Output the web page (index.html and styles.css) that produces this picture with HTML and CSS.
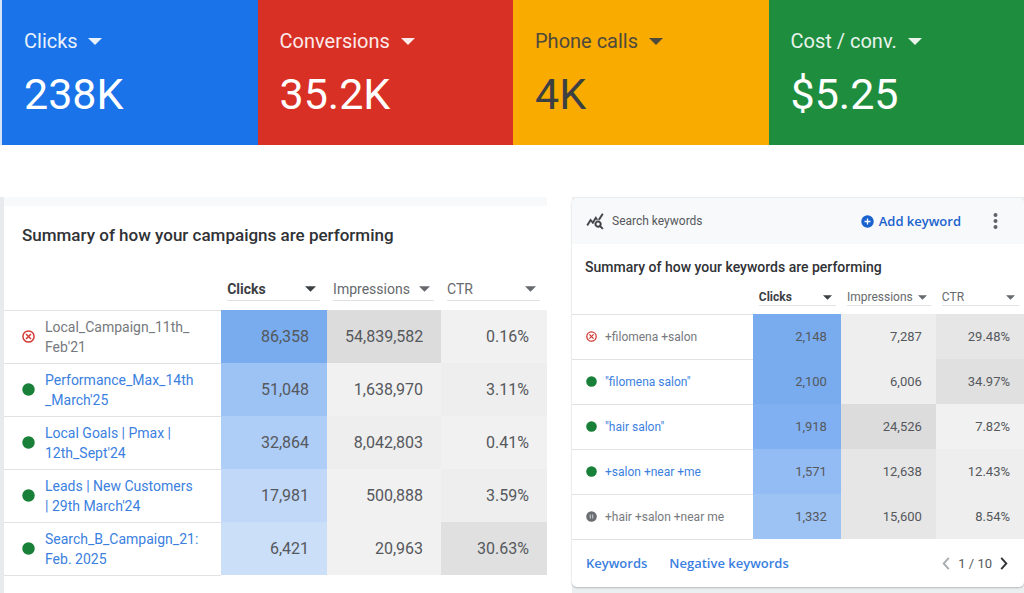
FILE: index.html
```html
<!DOCTYPE html>
<html lang="en">
<head>
  <meta charset="UTF-8" />
  <meta name="viewport" content="width=device-width, initial-scale=1" />
  <title>Campaign overview</title>
  <link rel="stylesheet" href="styles.css">
</head>
<body>
  <!-- Shared icons -->
  <svg class="sprite" aria-hidden="true">
    <symbol id="caret" viewBox="0 0 14 7"><path d="M0 0h14L7 7z" /></symbol>
    <symbol id="removed" viewBox="0 0 14 14">
      <circle cx="7" cy="7" r="6" fill="none" stroke="#d13a35" stroke-width="1.6" />
      <path d="M4.3 4.3l5.4 5.4M9.7 4.3L4.3 9.7" stroke="#d13a35" stroke-width="1.6" />
    </symbol>
    <symbol id="enabled" viewBox="0 0 14 14"><circle cx="7" cy="7" r="6.7" fill="#188038" /></symbol>
    <symbol id="paused" viewBox="0 0 14 14">
      <circle cx="7" cy="7" r="6.7" fill="#6a6d71" />
      <path d="M5.5 4.5v5M8.5 4.5v5" stroke="#c4c7ca" stroke-width="1.5" />
    </symbol>
  </svg>

  <section class="scorecards">
    <div class="scorecard blue">
      <div class="picker">
        <select aria-label="Metric 1"><option>Clicks</option></select>
        <svg class="caret"><use href="#caret" /></svg>
      </div>
      <div class="value">238K</div>
    </div>
    <div class="scorecard red">
      <div class="picker">
        <select aria-label="Metric 2"><option>Conversions</option></select>
        <svg class="caret"><use href="#caret" /></svg>
      </div>
      <div class="value">35.2K</div>
    </div>
    <div class="scorecard yellow">
      <div class="picker">
        <select aria-label="Metric 3"><option>Phone calls</option></select>
        <svg class="caret"><use href="#caret" /></svg>
      </div>
      <div class="value">4K</div>
    </div>
    <div class="scorecard green">
      <div class="picker">
        <select aria-label="Metric 4"><option>Cost / conv.</option></select>
        <svg class="caret"><use href="#caret" /></svg>
      </div>
      <div class="value">$5.25</div>
    </div>
  </section>

  <main class="panels">
    <section class="campaigns">
      <h2>Summary of how your campaigns are performing</h2>
      <table>
        <colgroup><col class="col-name"><col><col class="col-impr"><col></colgroup>
        <thead>
          <tr>
            <td></td>
            <th class="sorted"><div class="picker"><select aria-label="Column 1"><option>Clicks</option></select><svg class="caret"><use href="#caret" /></svg></div></th>
            <th><div class="picker"><select aria-label="Column 2"><option>Impressions</option></select><svg class="caret"><use href="#caret" /></svg></div></th>
            <th><div class="picker"><select aria-label="Column 3"><option>CTR</option></select><svg class="caret"><use href="#caret" /></svg></div></th>
          </tr>
        </thead>
        <tbody>
          <tr>
            <td><div class="item"><svg class="status"><use href="#removed" /></svg><span class="name">Local_Campaign_11th_<br>Feb'21</span></div></td>
            <td class="b1">86,358</td><td class="g1">54,839,582</td><td class="g6">0.16%</td>
          </tr>
          <tr>
            <td><div class="item"><svg class="status"><use href="#enabled" /></svg><a class="name" href="#">Performance_Max_14th<br>_March'25</a></div></td>
            <td class="b4">51,048</td><td class="g6">1,638,970</td><td class="g5">3.11%</td>
          </tr>
          <tr>
            <td><div class="item"><svg class="status"><use href="#enabled" /></svg><a class="name" href="#">Local Goals | Pmax |<br>12th_Sept'24</a></div></td>
            <td class="b5">32,864</td><td class="g5">8,042,803</td><td class="g6">0.41%</td>
          </tr>
          <tr>
            <td><div class="item"><svg class="status"><use href="#enabled" /></svg><a class="name" href="#">Leads | New Customers<br>| 29th March'24</a></div></td>
            <td class="b6">17,981</td><td class="g6">500,888</td><td class="g5">3.59%</td>
          </tr>
          <tr>
            <td><div class="item"><svg class="status"><use href="#enabled" /></svg><a class="name" href="#">Search_B_Campaign_21:<br>Feb. 2025</a></div></td>
            <td class="b7">6,421</td><td class="g6">20,963</td><td class="g2">30.63%</td>
          </tr>
        </tbody>
      </table>
    </section>

    <div class="card-wrap">
      <section class="keywords">
        <header>
          <svg class="stats-icon" viewBox="0 0 24 24" aria-hidden="true"><path d="M19.88 18.47c.44-.7.7-1.51.7-2.39 0-2.49-2.01-4.5-4.5-4.5s-4.5 2.01-4.5 4.5 2.01 4.5 4.49 4.5c.88 0 1.7-.26 2.39-.7L21.58 23 23 21.58l-3.12-3.11zm-3.8.11c-1.38 0-2.5-1.12-2.5-2.5s1.12-2.5 2.5-2.5 2.5 1.12 2.5 2.5-1.12 2.5-2.5 2.5zm-.36-8.5c-.74.02-1.45.18-2.1.45l-.55-.83-3.8 6.18-3.01-3.52-3.63 5.81L1 17l5-8 3 3.5L13 6l2.72 4.08zm2.59.5c-.64-.28-1.33-.45-2.05-.49L21.38 2 23 3.18l-4.69 7.4z" /></svg>
          <span class="card-name">Search keywords</span>
          <button class="add">
            <svg viewBox="0 0 14 14" aria-hidden="true"><circle cx="7" cy="7" r="6.7" fill="#1a63cf" /><path d="M7 3.8v6.4M3.8 7h6.4" stroke="#fff" stroke-width="1.4" /></svg>
            Add keyword
          </button>
          <button class="more" aria-label="More options">
            <svg viewBox="0 0 4 16"><circle cx="2" cy="2" r="2" /><circle cx="2" cy="8" r="2" /><circle cx="2" cy="14" r="2" /></svg>
          </button>
        </header>
        <h2>Summary of how your keywords are performing</h2>
        <table>
          <colgroup><col class="col-name"><col><col class="col-impr"><col></colgroup>
          <thead>
            <tr>
              <td></td>
              <th class="sorted"><div class="picker"><select aria-label="Keyword column 1"><option>Clicks</option></select><svg class="caret"><use href="#caret" /></svg></div></th>
              <th><div class="picker"><select aria-label="Keyword column 2"><option>Impressions</option></select><svg class="caret"><use href="#caret" /></svg></div></th>
              <th><div class="picker"><select aria-label="Keyword column 3"><option>CTR</option></select><svg class="caret"><use href="#caret" /></svg></div></th>
            </tr>
          </thead>
          <tbody>
            <tr>
              <td><div class="item"><svg class="status"><use href="#removed" /></svg><span class="name">+filomena +salon</span></div></td>
              <td class="b1">2,148</td><td class="g5">7,287</td><td class="g3">29.48%</td>
            </tr>
            <tr>
              <td><div class="item"><svg class="status"><use href="#enabled" /></svg><a class="name" href="#">"filomena salon"</a></div></td>
              <td class="b1">2,100</td><td class="g5">6,006</td><td class="g2">34.97%</td>
            </tr>
            <tr>
              <td><div class="item"><svg class="status"><use href="#enabled" /></svg><a class="name" href="#">"hair salon"</a></div></td>
              <td class="b2">1,918</td><td class="g1">24,526</td><td class="g6">7.82%</td>
            </tr>
            <tr>
              <td><div class="item"><svg class="status"><use href="#enabled" /></svg><a class="name" href="#">+salon +near +me</a></div></td>
              <td class="b3">1,571</td><td class="g3">12,638</td><td class="g5">12.43%</td>
            </tr>
            <tr>
              <td><div class="item"><svg class="status"><use href="#paused" /></svg><span class="name">+hair +salon +near me</span></div></td>
              <td class="b4">1,332</td><td class="g3">15,600</td><td class="g5">8.54%</td>
            </tr>
          </tbody>
        </table>
        <footer>
          <a href="#">Keywords</a>
          <a href="#">Negative keywords</a>
          <div class="pager">
            <button aria-label="Previous page" disabled><svg viewBox="0 0 8 14"><path d="M7 1L1.5 7 7 13" /></svg></button>
            <span>1 / 10</span>
            <button aria-label="Next page"><svg viewBox="0 0 8 14"><path d="M1 1l5.500 6L1 13" /></svg></button>
          </div>
        </footer>
      </section>
    </div>
  </main>
</body>
</html>
```
FILE: styles.css
```css
* {
  box-sizing: border-box;
}

body {
  margin: 0;
  min-height: 100vh;
  display: flex;
  flex-direction: column;
  gap: 52px;
  font-family: Roboto, sans-serif;
  color: #55585c;
  background: #fff;
}

.sprite {
  display: none;
}

a {
  color: #3b7fe0;
  text-decoration: none;
}

button {
  display: flex;
  align-items: center;
  padding: 0;
  border: none;
  background: none;
  font: inherit;
  cursor: pointer;
}

/* select with its own arrow laid over the right end */
.picker {
  display: inline-grid;
  align-items: center;
}

.picker select,
.picker .caret {
  grid-area: 1 / 1;
}

.picker select {
  appearance: none;
  margin: 0;
  padding: 0;
  border: none;
  background: none;
  font: inherit;
  color: inherit;
  cursor: pointer;
}

.caret {
  justify-self: end;
  fill: currentColor;
  pointer-events: none;
}

/* Scorecards */
.scorecards {
  display: grid;
  grid-template-columns: repeat(4, 1fr);
  border-left: 2px solid #d5e4f8;
}

.scorecard {
  padding: 28px 22px 25px;
  color: #fff;
}

.scorecard .picker {
  font-size: 20px;
  line-height: 26px;
  opacity: 0.9;
}

.scorecard .picker select {
  padding-right: 24px;
}

.scorecard .caret {
  width: 14px;
  height: 7px;
}

.value {
  margin-top: 14px;
  font-size: 43px;
  line-height: 52px;
}

.blue { background: #1a73e8; }
.red { background: #d93025; }
.yellow { background: #f9ab00; color: #3c4043; }
.green { background: #1e8e3e; }

/* Panels */
.panels {
  flex: 1;
  display: grid;
  grid-template-columns: 547fr 452fr;
  gap: 25px;
}

h2 {
  margin: 0;
  font-weight: 500;
  color: #303236;
}

table {
  width: 100%;
  table-layout: fixed;
  border-collapse: collapse;
}

.col-name { width: 40%; }
.col-impr { width: 21%; }

th,
td {
  padding: 0;
}

th {
  font-weight: 400;
  text-align: left;
  color: #66696d;
}

th .picker {
  display: grid;
  border-bottom: 1px solid #e0e2e4;
}

th.sorted {
  font-weight: 700;
  color: #3c4043;
}

tbody td {
  text-align: right;
}

tbody td:first-child {
  text-align: left;
  border-top: 1px solid #e0e2e4;
  border-bottom: 1px solid #e0e2e4;
}

.item {
  display: flex;
  align-items: center;
}

.status {
  flex: none;
}

.name {
  white-space: nowrap;
}

span.name {
  color: #76797d;
}

/* Heat map shades */
.b1 { background: #78acef; }
.b2 { background: #80b0f2; }
.b3 { background: #94bcf4; }
.b4 { background: #9dc2f4; }
.b5 { background: #aecdf7; }
.b6 { background: #c2d8f8; }
.b7 { background: #cbdff8; }
.g1 { background: #dcdcdc; }
.g2 { background: #e0e0e0; }
.g3 { background: #e6e6e6; }
.g5 { background: #eeeeee; }
.g6 { background: #f1f1f1; }

/* Campaigns */
.campaigns {
  border-left: 4px solid #e8eaed;
}

.campaigns::before {
  content: "";
  display: block;
  height: 9px;
  background: #f8f9fa;
}

.campaigns h2 {
  padding: 17px 18px 31px;
  font-size: 17px;
  line-height: 24px;
}

.campaigns th {
  padding: 0 7px 9px 6px;
  font-size: 14px;
}

.campaigns th .picker select {
  height: 22px;
}

.campaigns .caret {
  width: 11px;
  height: 6px;
  margin-right: 4px;
}

.campaigns tbody tr {
  height: 53px;
}

.campaigns tbody td {
  padding: 0 18px;
  font-size: 16px;
}

.campaigns .item {
  gap: 10px;
}

.campaigns .status {
  width: 13px;
  height: 13px;
}

.campaigns .name {
  font-size: 14px;
  line-height: 20px;
}

/* Keywords card */
.card-wrap {
  padding: 1px 0 5px;
  background: #eceff0;
}

.keywords {
  border-radius: 5px;
  background: #fff;
  box-shadow: 0 1px 2px #b6b9bc;
  overflow: hidden;
}

.keywords header {
  display: flex;
  align-items: center;
  height: 46px;
  padding: 0 26px 0 14px;
  background: #f8f9fa;
}

.stats-icon {
  width: 18px;
  height: 18px;
  fill: #3c4043;
  stroke: #3c4043;
  stroke-width: 0.6;
}

.card-name {
  margin-left: 8px;
  font-size: 12px;
}

.add {
  gap: 5px;
  margin-left: auto;
  font-family: "Open Sans", sans-serif;
  font-size: 13px;
  font-weight: 600;
  color: #1a63cf;
}

.add svg {
  width: 13px;
  height: 13px;
}

.more {
  margin-left: 32px;
}

.more svg {
  width: 5px;
  height: 16px;
  fill: #5f6368;
}

.keywords h2 {
  padding: 12px 13px 11px;
  font-size: 14px;
  line-height: 22px;
}

.keywords th {
  padding: 0 5px 8px 6px;
  font-size: 12px;
}

.keywords th .picker select {
  height: 16px;
}

.keywords .caret {
  width: 9px;
  height: 5px;
  margin-right: 4px;
}

.keywords tbody tr {
  height: 45px;
}

.keywords tbody td {
  padding: 0 14px;
  font-size: 13px;
}

.keywords .item {
  gap: 8px;
}

.keywords .status {
  width: 11px;
  height: 11px;
}

.keywords .name {
  font-size: 12px;
}

.keywords footer {
  display: flex;
  align-items: center;
  gap: 22px;
  height: 47px;
  padding: 0 16px 0 14px;
  font-size: 13px;
}

.keywords footer a {
  font-family: "Open Sans", sans-serif;
  font-weight: 600;
}

.pager {
  display: flex;
  align-items: center;
  gap: 8px;
  margin-left: auto;
}

.pager svg {
  width: 8px;
  height: 13px;
  fill: none;
  stroke: #303236;
  stroke-width: 2;
}

.pager button:disabled svg {
  stroke: #a9acaf;
}
```
